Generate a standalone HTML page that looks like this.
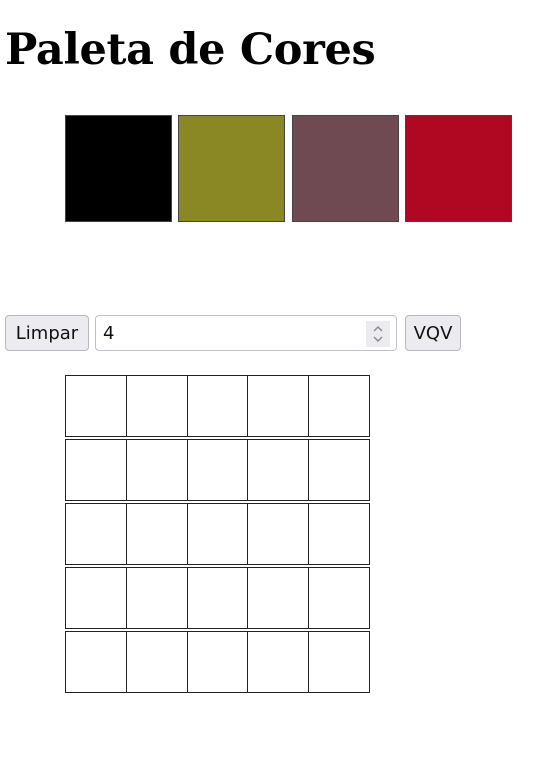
<!DOCTYPE html>
<html><head><meta charset="utf-8"><style>
body{margin:0;width:549px;height:782px;background:#fff;position:relative;overflow:hidden;font-family:"DejaVu Sans","Liberation Sans",sans-serif}
h1{position:absolute;left:5px;top:20px;margin:0;font-family:"DejaVu Serif","Liberation Serif",serif;font-weight:bold;font-size:43px;letter-spacing:-0.3px;line-height:60px}
.p{position:absolute;top:115px;width:105px;height:105px;border:1px solid #444}
.b{position:absolute;top:315px;height:34px;border:1px solid #b8b8c0;border-radius:4px;background:#ececf0;font-size:18px;line-height:36px;text-align:center;color:#111;box-sizing:content-box}
.c{position:absolute;width:60px;height:60px;border:1px solid #222}
</style></head><body>
<h1>Paleta de Cores</h1>
<div class="p" style="left:65px;background:#000"></div>
<div class="p" style="left:178px;background:#8a8725"></div>
<div class="p" style="left:292px;background:#6f4a52"></div>
<div class="p" style="left:405px;background:#b00822"></div>
<div class="b" style="left:5px;width:82px">Limpar</div>
<div class="b" style="left:95px;width:300px;background:#fff;text-align:left;border-color:#c0c0c8"><span style="margin-left:7px">4</span>
<div style="position:absolute;right:6px;top:5px;width:24px;height:26px;background:#ececf0"><svg width="24" height="26" viewBox="0 0 24 26"><path d="M8 10l4-4 4 4M8 16l4 4 4-4" fill="none" stroke="#888" stroke-width="1.4"/></svg></div></div>
<div class="b" style="left:405px;width:54px">VQV</div>
<div id="g"></div>
<script>
var xs=[65,126,187,247,308],ys=[375,439,503,567,631],h='';
ys.forEach(function(y){xs.forEach(function(x,i){var w=(i<4?xs[i+1]:369)-x-1;h+='<div class="c" style="left:'+x+'px;top:'+y+'px;width:'+w+'px"></div>';});});
document.getElementById('g').innerHTML=h;
</script>
</body></html>
